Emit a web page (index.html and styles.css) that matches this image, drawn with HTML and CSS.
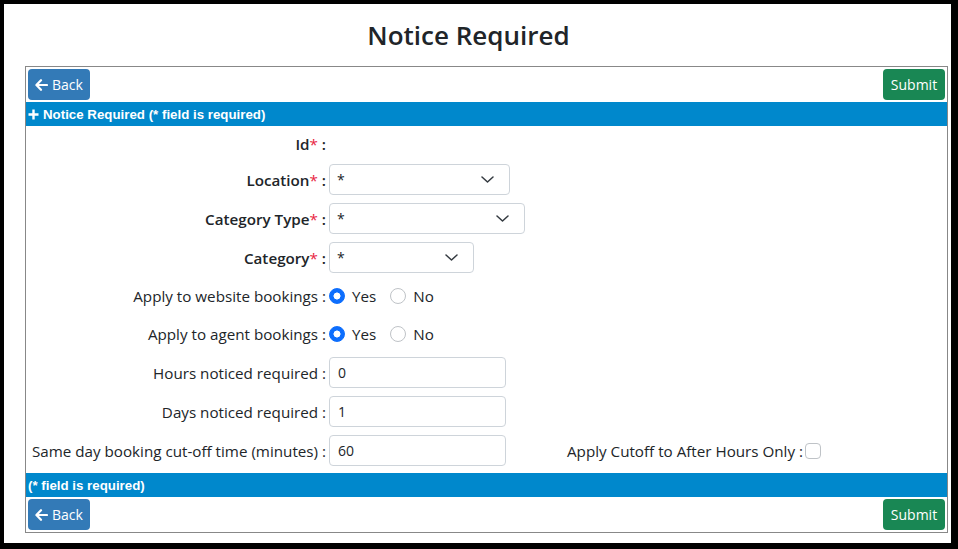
FILE: index.html
```html
<!DOCTYPE html>
<html lang="en">
<head>
    <meta charset="UTF-8">
    <meta name="viewport" content="width=device-width, initial-scale=1.0">
    <link rel="stylesheet" href="styles.css">
    <title>Notice Required</title>
</head>
<body>
    <div class="frame">
        <h1 class="page-title">Notice Required</h1>

        <div class="panel">
            <div class="toolbar">
                <button class="btn btn-back">
                    <svg width="13" height="12" viewBox="0 0 13 12"><path d="M6 1.2 1.4 6 6 10.8M1.6 6H12" fill="none" stroke="#fff" stroke-width="2.2" stroke-linecap="round" stroke-linejoin="round"/></svg>
                    Back
                </button>
                <button class="btn btn-submit">Submit</button>
            </div>

            <div class="section-bar">
                <svg width="11" height="11" viewBox="0 0 11 11"><path d="M5.5 0.5v10M0.5 5.5h10" stroke="#fff" stroke-width="2.4"/></svg>
                Notice Required (* field is required)
            </div>

            <form class="notice-form">
                <div class="form-row row-id">
                    <label class="field-label required">Id<span class="star">*</span> :</label>
                </div>
                <div class="form-row">
                    <label class="field-label required" for="location">Location<span class="star">*</span> :</label>
                    <div class="select-wrap w-location">
                        <select id="location"><option>*</option></select>
                        <svg class="chevron" width="13" height="7" viewBox="0 0 13 7"><path d="M1 1l5.5 5 5.5-5" fill="none" stroke="#343a40" stroke-width="1.5" stroke-linecap="round" stroke-linejoin="round"/></svg>
                    </div>
                </div>
                <div class="form-row">
                    <label class="field-label required" for="category-type">Category Type<span class="star">*</span> :</label>
                    <div class="select-wrap w-type">
                        <select id="category-type"><option>*</option></select>
                        <svg class="chevron" width="13" height="7" viewBox="0 0 13 7"><path d="M1 1l5.5 5 5.5-5" fill="none" stroke="#343a40" stroke-width="1.5" stroke-linecap="round" stroke-linejoin="round"/></svg>
                    </div>
                </div>
                <div class="form-row">
                    <label class="field-label required" for="category">Category<span class="star">*</span> :</label>
                    <div class="select-wrap w-category">
                        <select id="category"><option>*</option></select>
                        <svg class="chevron" width="13" height="7" viewBox="0 0 13 7"><path d="M1 1l5.5 5 5.5-5" fill="none" stroke="#343a40" stroke-width="1.5" stroke-linecap="round" stroke-linejoin="round"/></svg>
                    </div>
                </div>
                <div class="form-row radio-row">
                    <label class="field-label">Apply to website bookings :</label>
                    <label class="radio-option"><input type="radio" name="website" checked> Yes</label>
                    <label class="radio-option"><input type="radio" name="website"> No</label>
                </div>
                <div class="form-row radio-row">
                    <label class="field-label">Apply to agent bookings :</label>
                    <label class="radio-option"><input type="radio" name="agent" checked> Yes</label>
                    <label class="radio-option"><input type="radio" name="agent"> No</label>
                </div>
                <div class="form-row">
                    <label class="field-label" for="hours">Hours noticed required :</label>
                    <input class="text-input" type="text" id="hours" value="0">
                </div>
                <div class="form-row">
                    <label class="field-label" for="days">Days noticed required :</label>
                    <input class="text-input" type="text" id="days" value="1">
                </div>
                <div class="form-row">
                    <label class="field-label" for="cutoff">Same day booking cut-off time (minutes) :</label>
                    <input class="text-input" type="text" id="cutoff" value="60">
                    <label class="field-label extra-label" for="after-hours">Apply Cutoff to After Hours Only :</label>
                    <input class="check-input" type="checkbox" id="after-hours">
                </div>
            </form>

            <div class="section-bar">(* field is required)</div>

            <div class="toolbar">
                <button class="btn btn-back">
                    <svg width="13" height="12" viewBox="0 0 13 12"><path d="M6 1.2 1.4 6 6 10.8M1.6 6H12" fill="none" stroke="#fff" stroke-width="2.2" stroke-linecap="round" stroke-linejoin="round"/></svg>
                    Back
                </button>
                <button class="btn btn-submit">Submit</button>
            </div>
        </div>
    </div>
</body>
</html>
```

FILE: styles.css
```css
body {
    margin: 0;
    background-color: #000;
    font-family: "Open Sans", "Noto Sans", sans-serif;
    color: #212529;
}

.frame {
    margin: 4px 7px 6px 4px;
    height: 539px;
    background-color: #fff;
    overflow: hidden;
}

.page-title {
    margin: 14px 18px 14px 0;
    height: 34px;
    line-height: 34px;
    font-size: 26px;
    font-weight: 600;
    text-align: center;
    color: #212529;
}

.panel {
    margin: 0 3px 0 21px;
    border: 1px solid #888;
}

.toolbar {
    display: flex;
    justify-content: space-between;
    padding: 2px;
}

.btn {
    display: flex;
    align-items: center;
    justify-content: center;
    gap: 4px;
    width: 62px;
    height: 31px;
    padding: 0;
    border: none;
    border-radius: 4px;
    color: #fff;
    font-family: "Open Sans", "Noto Sans", sans-serif;
    font-size: 14px;
    cursor: pointer;
}

.btn-back {
    background-color: #337ab7;
}

.btn-submit {
    background-color: #198754;
}

.section-bar {
    display: flex;
    align-items: center;
    gap: 4px;
    height: 24px;
    padding: 0 2px;
    background-color: #0088cc;
    color: #fff;
    font-family: "Liberation Sans", Arial, sans-serif;
    font-size: 13.3px;
    font-weight: bold;
}

.notice-form {
    padding: 6px 0 7px;
    display: flex;
    flex-direction: column;
    gap: 8px;
}

.form-row {
    display: flex;
    align-items: center;
    height: 31px;
    font-size: 15.2px;
}

.row-id {
    height: 24px;
}

.radio-row {
    height: 30px;
}

.field-label {
    flex: none;
    width: 300px;
    padding-right: 3px;
    text-align: right;
    white-space: nowrap;
}

.field-label.required {
    font-weight: 600;
}

.star {
    color: #e8253f;
    font-weight: normal;
}

.select-wrap {
    position: relative;
    height: 31px;
}

.select-wrap select {
    appearance: none;
    width: 100%;
    height: 31px;
    padding: 0 30px 0 7px;
    border: 1px solid #ced4da;
    border-radius: 4px;
    background-color: #fff;
    color: #212529;
    font-family: "Open Sans", "Noto Sans", sans-serif;
    font-size: 14px;
}

.chevron {
    position: absolute;
    right: 16px;
    top: 12px;
    pointer-events: none;
}

.w-location {
    width: 181px;
}

.w-type {
    width: 196px;
}

.w-category {
    width: 145px;
}

.radio-option {
    display: flex;
    align-items: center;
    gap: 7px;
    margin-right: 14px;
}

.radio-option input {
    appearance: none;
    width: 16px;
    height: 16px;
    margin: 0;
    border: 1px solid #bfc3c7;
    border-radius: 50%;
    background-color: #fff;
}

.radio-option input:checked {
    border-color: #0d6efd;
    background: radial-gradient(circle, #fff 3.2px, #0d6efd 3.8px);
}

.text-input {
    width: 177px;
    height: 31px;
    box-sizing: border-box;
    padding: 0 8px;
    border: 1px solid #ced4da;
    border-radius: 4px;
    color: #212529;
    font-family: "Open Sans", "Noto Sans", sans-serif;
    font-size: 14px;
}

.extra-label {
    width: 297px;
    padding-right: 2px;
}

.check-input {
    appearance: none;
    width: 16px;
    height: 16px;
    margin: 0;
    border: 1px solid #bfc3c7;
    border-radius: 4px;
    background-color: #fff;
}
```
